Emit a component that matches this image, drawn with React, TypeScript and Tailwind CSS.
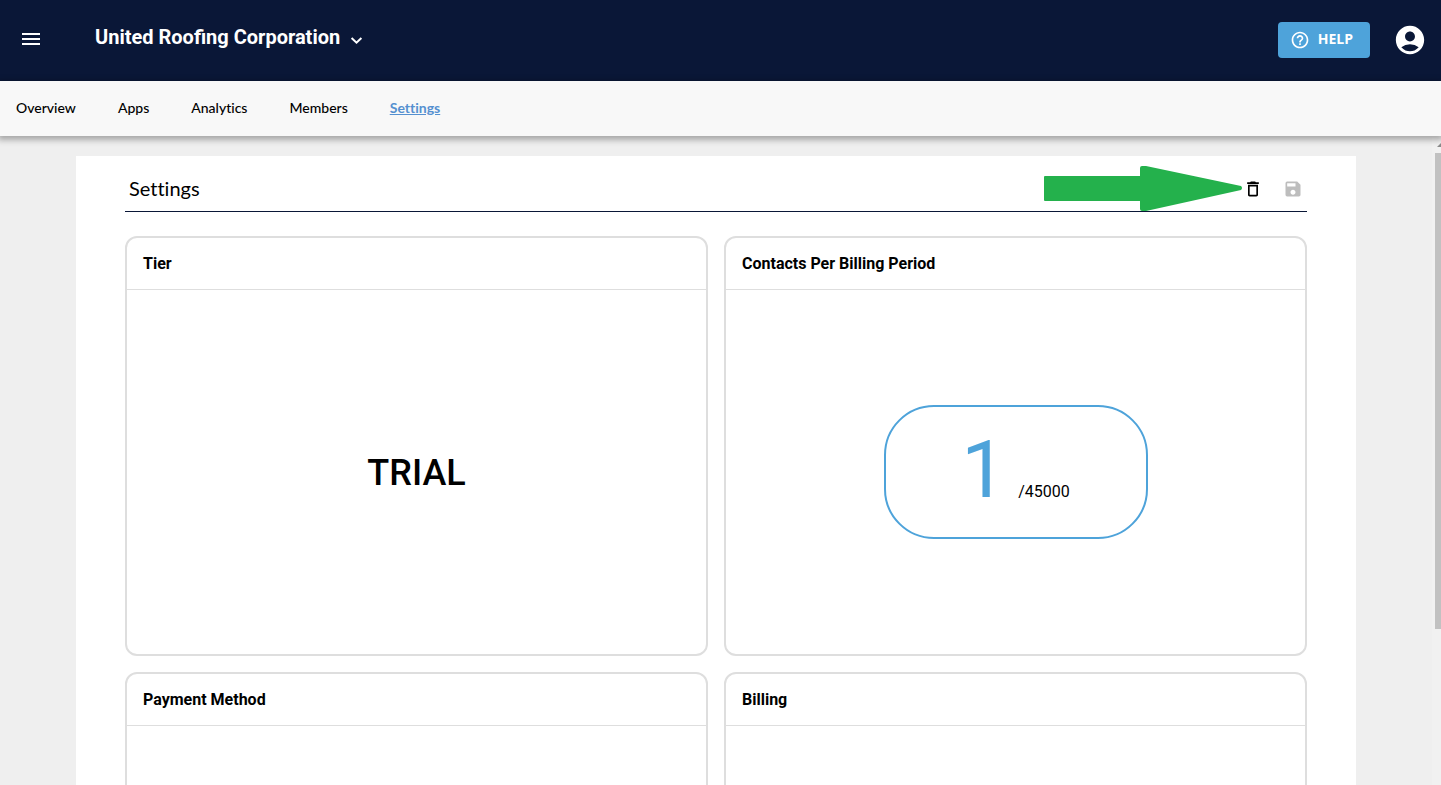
import type { ReactNode } from "react";
import {
  MdAccountCircle,
  MdDeleteOutline,
  MdHelpOutline,
  MdMenu,
  MdSave,
} from "react-icons/md";

const tabs = ["Overview", "Apps", "Analytics", "Members"];

function Card({ title, children }: { title: string; children?: ReactNode }) {
  return (
    <section className="flex h-[420px] flex-col rounded-xl border-2 border-[#dedede] bg-white">
      <h2 className="border-b border-[#dedede] px-4 pt-3.5 pb-[13px] text-base leading-6 font-bold">
        {title}
      </h2>
      <div className="flex flex-1 items-center justify-center">{children}</div>
    </section>
  );
}

function Header() {
  return (
    <header className="flex h-[81px] shrink-0 items-center bg-[#0a1737] pr-3.5 pb-0.5 pl-[19px] text-white">
      <button type="button" aria-label="Open menu" className="mr-[52px] pb-0.5">
        <MdMenu size={24} />
      </button>
      <button type="button" className="flex items-center gap-1.5">
        <span className="pb-1.5 text-xl leading-6 font-bold">United Roofing Corporation</span>
        <svg className="size-5" viewBox="0 0 20 20" fill="none" aria-hidden="true">
          <path d="M5.6 8L10.5 12.7L15.4 8" stroke="currentColor" strokeWidth="2" />
        </svg>
      </button>
      <button
        type="button"
        className="ml-auto flex h-9 items-center gap-2 rounded bg-[#4ea3da] pr-[17px] pl-3 font-['Open_Sans',sans-serif] text-sm font-bold"
      >
        <MdHelpOutline size={20} />
        <span className="pb-0.5">HELP</span>
      </button>
      <button type="button" aria-label="Account" className="ml-[23px]">
        <MdAccountCircle size={34} />
      </button>
    </header>
  );
}

function Tabs() {
  return (
    <nav className="relative z-10 flex h-[55px] shrink-0 items-center gap-[42px] bg-[#f8f8f8] px-4 pb-0.5 font-['Lato',sans-serif] text-sm font-medium shadow-[0_2px_6px_2px_rgba(0,0,0,0.3)] [font-variant-ligatures:none]">
      {tabs.map((tab) => (
        <a key={tab} href="#">
          {tab}
        </a>
      ))}
      <a href="#" aria-current="page" className="font-bold text-[#5590d0] underline">
        Settings
      </a>
    </nav>
  );
}

export default function App() {
  return (
    <div className="flex h-screen flex-col overflow-hidden bg-[#efefef] font-['Roboto',sans-serif] text-black">
      <Header />
      <Tabs />
      <div className="flex min-h-0 flex-1">
        <main className="min-w-0 flex-1 overflow-hidden pt-5">
          <div className="mx-auto max-w-[1280px] bg-white px-[49px] pb-12">
            <div className="relative flex h-14 items-center border-b border-[#0a1737] pt-2.5 pl-1">
              <h1 className="pb-0.5 font-['Lato',sans-serif] text-xl leading-7 [font-variant-ligatures:none]">
                Settings
              </h1>
              <div className="ml-auto flex gap-5 pr-1">
                <button type="button" aria-label="Delete">
                  <MdDeleteOutline size={20} />
                </button>
                <button type="button" aria-label="Save" disabled className="text-[#bdbdbd]">
                  <MdSave size={20} />
                </button>
              </div>
              <svg
                className="absolute top-2.5 right-16 h-[46px] w-[200px]"
                viewBox="0 0 200 46"
                fill="#24b14c"
                aria-hidden="true"
              >
                <path d="M2 10H97V2Q97 0 99 0H103L198 20Q200 22 198 24L103 45H99Q97 45 97 43V35H2Q1 35 1 34V11Q1 10 2 10Z" />
              </svg>
            </div>
            <div className="mt-6 grid grid-cols-2 gap-4">
              <Card title="Tier">
                <p className="pt-0.5 text-4xl font-medium">TRIAL</p>
              </Card>
              <Card title="Contacts Per Billing Period">
                <p className="flex h-[134px] w-[264px] items-baseline justify-center gap-3 rounded-[50px] border-2 border-[#4ea3da] pt-[15px]">
                  <span className="text-[80px] leading-24 text-[#4ea3da]">1</span>
                  <span className="text-base">/45000</span>
                </p>
              </Card>
              <Card title="Payment Method" />
              <Card title="Billing" />
            </div>
          </div>
        </main>
        <div aria-hidden="true" className="w-[9px] shrink-0 overflow-hidden bg-[#f1f1f1] pl-[3px]">
          <svg className="h-[17px] w-[14px]" viewBox="0 0 14 17" fill="#8b8b8b">
            <path d="M2 11L7 6L12 11Z" />
          </svg>
          <div className="h-[476px] bg-[#c1c1c1]" />
        </div>
      </div>
    </div>
  );
}
